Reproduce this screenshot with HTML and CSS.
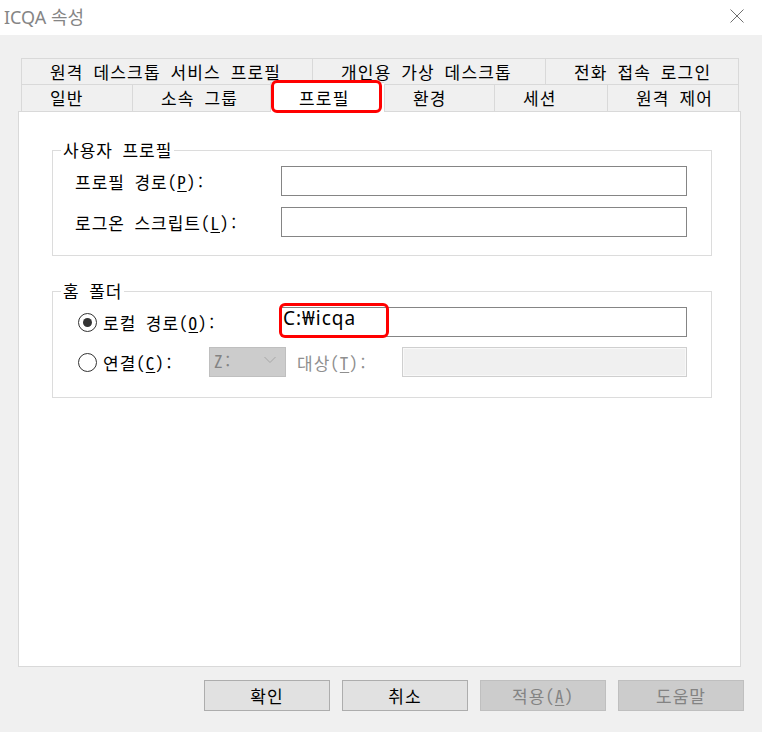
FILE: index.html
```html
<!DOCTYPE html>
<html lang="ko">
<head>
    <meta charset="UTF-8">
    <title>ICQA 속성</title>
    <link rel="stylesheet" href="styles.css">
</head>
<body>
    <div class="titlebar">
        <span class="title">ICQA 속성</span>
        <svg class="close" width="14" height="14" viewBox="0 0 14 14">
            <path d="M0.5 0.5L13.5 13.5M13.5 0.5L0.5 13.5" stroke="#6f6f6f" stroke-width="1" fill="none"/>
        </svg>
    </div>

    <div class="dialog">
        <div class="tabs">
            <div class="tab-row top">
                <div class="tab">원격 데스크톱 서비스 프로필</div>
                <div class="tab">개인용 가상 데스크톱</div>
                <div class="tab">전화 접속 로그인</div>
            </div>
            <div class="tab-row bottom">
                <div class="tab">일반</div>
                <div class="tab">소속 그룹</div>
                <div class="tab selected">프로필<span class="mark"></span></div>
                <div class="tab">환경</div>
                <div class="tab">세션</div>
                <div class="tab">원격 제어</div>
            </div>
        </div>

        <div class="panel">
            <div class="group">
                <span class="group-title">사용자 프로필</span>
                <div class="rows">
                    <div class="row">
                        <span class="caption">프로필 경로(<u>P</u>):</span>
                        <div class="field"></div>
                    </div>
                    <div class="row">
                        <span class="caption">로그온 스크립트(<u>L</u>):</span>
                        <div class="field"></div>
                    </div>
                </div>
            </div>

            <div class="group home">
                <span class="group-title">홈 폴더</span>
                <div class="rows">
                    <div class="row">
                        <span class="choice"><span class="radio checked"></span>로컬 경로(<u>O</u>):</span>
                        <div class="field value">C:₩icqa<span class="mark"></span></div>
                    </div>
                    <div class="row">
                        <span class="choice short"><span class="radio"></span>연결(<u>C</u>):</span>
                        <div class="combo">
                            <span>Z:</span>
                            <svg width="12" height="8" viewBox="0 0 12 8">
                                <path d="M0.5 1L6 6.5L11.5 1" stroke="#a6a6a6" stroke-width="1" fill="none"/>
                            </svg>
                        </div>
                        <span class="caption off">대상(<u>T</u>):</span>
                        <div class="field off"></div>
                    </div>
                </div>
            </div>
        </div>
    </div>

    <div class="buttons">
        <button class="btn">확인</button>
        <button class="btn">취소</button>
        <button class="btn" disabled>적용(<u>A</u>)</button>
        <button class="btn" disabled>도움말</button>
    </div>
</body>
</html>
```

FILE: styles.css
```css
body {
    margin: 0;
    width: 762px;
    height: 732px;
    background-color: #f0f0f0;
    color: #000;
    font-family: "Noto Sans Mono CJK KR", "Noto Sans CJK KR", sans-serif;
    font-size: 17px;
}

u {
    text-decoration-thickness: 1px;
    text-underline-offset: 2px;
}

/* title bar */
.titlebar {
    display: flex;
    align-items: center;
    justify-content: space-between;
    height: 35px;
    padding: 0 18px 3px 4px;
    box-sizing: border-box;
    background-color: #fff;
}

.title {
    font-family: "Noto Sans", "Noto Sans CJK KR", sans-serif;
    font-size: 18px;
    color: #858585;
}

/* tabs */
.dialog {
    padding: 23px 0 0 18px;
}

.tabs {
    width: 718px;
    margin-left: 3px;
    font-size: 17px;
    letter-spacing: 1.2px;
}

.tab-row {
    display: grid;
    border-right: 1px solid #d9d9d9;
}

.tab-row.top {
    grid-template-columns: 291px 233px 194px;
}

.tab-row.bottom {
    grid-template-columns: 111px 138px 114px 110px 113px 132px;
}

.tab {
    padding-left: 28px;
    border-top: 1px solid #d9d9d9;
    border-left: 1px solid #d9d9d9;
    white-space: nowrap;
}

.tab-row.top .tab {
    line-height: 25px;
}

.tab-row.bottom .tab {
    line-height: 26px;
}

.tab.selected {
    position: relative;
    z-index: 1;
    margin: -2px 0 -1px;
    padding-top: 2px;
    background-color: #fff;
}

.tab.selected .mark {
    position: absolute;
    top: -3px;
    left: 0;
    right: 2px;
    bottom: -1px;
    border: 3px solid #ff0000;
    border-radius: 6px;
}

/* page */
.panel {
    width: 723px;
    height: 556px;
    box-sizing: border-box;
    padding: 38px 28px 0 33px;
    border: 1px solid #d9d9d9;
    background-color: #fff;
    letter-spacing: 1px;
}

.group {
    padding: 0 24px 18px 22px;
    border: 1px solid #dcdcdc;
}

.group.home {
    margin-top: 35px;
    padding-bottom: 20px;
}

.group-title {
    display: block;
    width: fit-content;
    margin: -11px 0 6px -14px;
    padding: 0 2px;
    line-height: 20px;
    background-color: #fff;
}

.rows {
    display: flex;
    flex-direction: column;
    gap: 11px;
}

.group.home .rows {
    gap: 10px;
}

.row {
    display: flex;
    align-items: center;
    height: 30px;
}

.caption,
.choice {
    display: flex;
    align-items: center;
    width: 206px;
    flex-shrink: 0;
    white-space: nowrap;
}

.choice.short {
    width: 134px;
}

.caption.off {
    width: 105px;
    padding-left: 11px;
    color: #8f8f8f;
}

.radio {
    width: 19px;
    height: 19px;
    margin: 0 6px 0 3px;
    border: 1px solid #333;
    border-radius: 50%;
    box-sizing: border-box;
    display: flex;
    align-items: center;
    justify-content: center;
}

.radio.checked::after {
    content: "";
    width: 9px;
    height: 9px;
    border-radius: 50%;
    background-color: #333;
}

.field {
    position: relative;
    flex: 1;
    height: 30px;
    box-sizing: border-box;
    border: 1px solid #858585;
    background-color: #fff;
}

.field.value {
    padding-left: 1px;
    font-family: "Noto Sans", "Noto Sans CJK KR", sans-serif;
    font-size: 19px;
    line-height: 21px;
}

.field .mark {
    position: absolute;
    top: -5px;
    left: -3px;
    width: 110px;
    bottom: -2px;
    box-sizing: border-box;
    border: 3px solid #ff0000;
    border-radius: 6px;
}

.field.off {
    border-color: #cfcfcf;
    background-color: #f0f0f0;
    box-shadow: inset 0 0 0 1px #f8f8f8;
}

.combo {
    display: flex;
    align-items: center;
    justify-content: space-between;
    width: 77px;
    height: 30px;
    box-sizing: border-box;
    padding: 0 9px 4px 4px;
    border: 1px solid #bfbfbf;
    background-color: #cccccc;
    color: #838383;
}

/* dialog buttons */
.buttons {
    display: flex;
    justify-content: flex-end;
    gap: 12px;
    margin-top: 13px;
    padding-right: 18px;
}

.btn {
    width: 126px;
    height: 31px;
    padding: 0;
    border: 1px solid #adadad;
    background-color: #e1e1e1;
    color: #000;
    font-family: inherit;
    font-size: 17px;
    letter-spacing: 1px;
}

.btn:disabled {
    border-color: #bfbfbf;
    background-color: #cccccc;
    color: #838383;
}
```
